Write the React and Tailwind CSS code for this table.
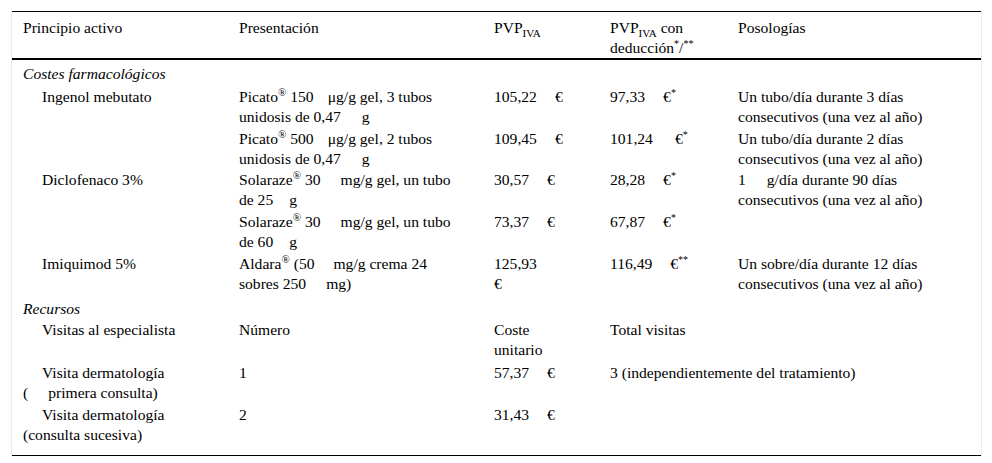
const Gap = ({ w = 'w-[14px]' }) => <span className={`inline-block ${w}`} />;

const Reg = () => <sup className="relative -top-[6px] text-[11px] leading-none">®</sup>;
const Star = ({ children }) => <sup className="relative -top-[6px] text-[10px] leading-none">{children}</sup>;

const Euro = ({ w = 'w-[18px]', children }) => (
  <>
    <Gap w={w} />€{children}
  </>
);

const rows = [
  { section: 'Costes farmacológicos', extra: 'pt-[4px] pb-[2px]' },
  {
    name: 'Ingenol mebutato',
    pres: (
      <>
        Picato<Reg /> 150<Gap />μg/g gel, 3 tubos<br />unidosis de 0,47<Gap w="w-[21px]" />g
      </>
    ),
    pvp: <>105,22<Euro /></>,
    ded: <>97,33<Euro><Star>*</Star></Euro></>,
    pos: <>Un tubo/día durante 3 días<br />consecutivos (una vez al año)</>,
  },
  {
    pres: (
      <>
        Picato<Reg /> 500<Gap />μg/g gel, 2 tubos<br />unidosis de 0,47<Gap w="w-[21px]" />g
      </>
    ),
    pvp: <>109,45<Euro /></>,
    ded: <>101,24<Euro w="w-[22px]"><Star>*</Star></Euro></>,
    pos: <>Un tubo/día durante 2 días<br />consecutivos (una vez al año)</>,
    extra: 'pb-0',
  },
  {
    name: 'Diclofenaco 3%',
    pres: (
      <>
        Solaraze<Reg /> 30<Gap w="w-[20px]" />mg/g gel, un tubo<br />de 25<Gap w="w-[16px]" />g
      </>
    ),
    pvp: <>30,57<Euro /></>,
    ded: <>28,28<Euro><Star>*</Star></Euro></>,
    pos: <>1<Gap w="w-[21px]" />g/día durante 90 días<br />consecutivos (una vez al año)</>,
  },
  {
    pres: (
      <>
        Solaraze<Reg /> 30<Gap w="w-[20px]" />mg/g gel, un tubo<br />de 60<Gap w="w-[16px]" />g
      </>
    ),
    pvp: <>73,37<Euro /></>,
    ded: <>67,87<Euro><Star>*</Star></Euro></>,
    pos: null,
  },
  {
    name: 'Imiquimod 5%',
    pres: (
      <>
        Aldara<Reg /> (50<Gap w="w-[19px]" />mg/g crema 24<br />sobres 250<Gap w="w-[20px]" />mg)
      </>
    ),
    pvp: <>125,93<br />€</>,
    ded: <>116,49<Euro><Star>**</Star></Euro></>,
    pos: <>Un sobre/día durante 12 días<br />consecutivos (una vez al año)</>,
  },
  { section: 'Recursos', extra: 'pt-[4px] pb-0' },
  {
    name: 'Visitas al especialista',
    pres: 'Número',
    pvp: <>Coste<br />unitario</>,
    ded: 'Total visitas',
    extra: 'pb-[2px]',
  },
  {
    name: (
      <>
        Visita dermatología<br />(<Gap w="w-[20px]" />primera consulta)
      </>
    ),
    pres: '1',
    pvp: <>57,37<Euro /></>,
    ded: <span className="whitespace-nowrap">3 (independientemente del tratamiento)</span>,
  },
  {
    name: (
      <>
        Visita dermatología<br />(consulta sucesiva)
      </>
    ),
    pres: '2',
    pvp: <>31,43<Euro /></>,
  },
];

export default function App() {
  return (
    <div className="min-h-[463px] bg-white pt-[11px] pl-[11px] font-['Liberation_Serif',serif] text-[15.6px] leading-[20px] text-black">
      <div className="w-[971px] border-x border-[#ececec]">
        <table className="w-full table-fixed border-collapse font-['Liberation_Serif',serif] text-[15.6px] leading-[20px]">
          <colgroup>
            <col className="w-[216px]" />
            <col className="w-[255px]" />
            <col className="w-[116px]" />
            <col className="w-[128px]" />
            <col />
          </colgroup>
          <thead>
            <tr className="border-t border-b-2 border-black align-top text-left">
              <th className="px-[11px] pt-[6px] pb-[10px] font-normal">Principio activo</th>
              <th className="px-[11px] pt-[6px] font-normal">Presentación</th>
              <th className="px-[11px] pt-[6px] font-normal">
                PVP<sub className="relative top-[4px] text-[11px] leading-none">IVA</sub>
              </th>
              <th className="px-[11px] pt-[6px] font-normal">
                PVP<sub className="relative top-[4px] text-[11px] leading-none">IVA</sub> con
                <br />
                deducción<Star>*</Star>/<Star>**</Star>
              </th>
              <th className="px-[11px] pt-[6px] font-normal">Posologías</th>
            </tr>
          </thead>
          <tbody className="border-b border-black">
            {rows.map((r, i) =>
              r.section ? (
                <tr key={i}>
                  <td colSpan={5} className={`px-[11px] italic ${r.extra}`}>
                    {r.section}
                  </td>
                </tr>
              ) : (
                <tr key={i} className="align-top">
                  <td className={`pl-[11px] pr-[4px] indent-[19px] pt-[1px] ${r.extra || 'pb-[1px]'}`}>{r.name}</td>
                  <td className={`px-[11px] pt-[1px] ${r.extra || 'pb-[1px]'}`}>{r.pres}</td>
                  <td className={`px-[11px] pt-[1px] ${r.extra || 'pb-[1px]'}`}>{r.pvp}</td>
                  <td className={`px-[11px] pt-[1px] ${r.extra || 'pb-[1px]'}`}>{r.ded}</td>
                  <td className={`px-[11px] pt-[1px] ${r.extra || 'pb-[1px]'}`}>{r.pos}</td>
                </tr>
              )
            )}
            <tr>
              <td colSpan={5} className="h-[9px]" />
            </tr>
          </tbody>
        </table>
      </div>
    </div>
  );
}
